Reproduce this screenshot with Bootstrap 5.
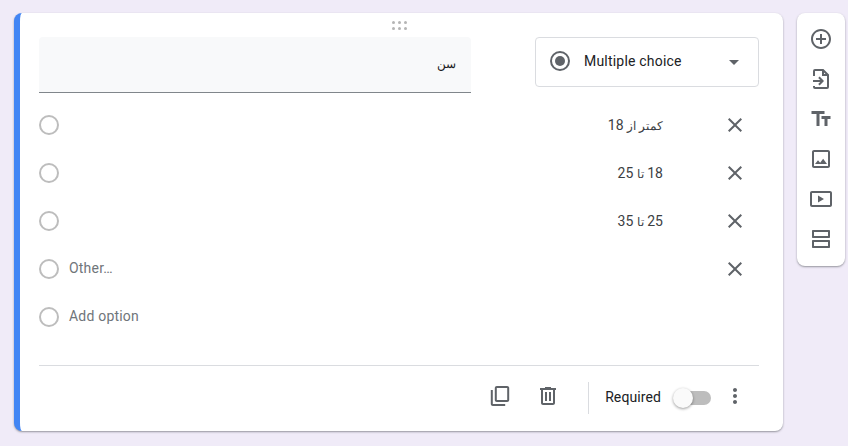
<!DOCTYPE html>
<html lang="en">
<head>
<meta charset="utf-8">
<title>Question editor</title>
<link rel="stylesheet" href="https://cdn.jsdelivr.net/npm/bootstrap@5.3.0/dist/css/bootstrap.min.css">
<style>
html,body{height:446px;overflow:hidden}
body{background:#f0ebf8;font-family:Roboto,"Liberation Sans",sans-serif;font-size:14px;color:#202124;padding:13px 3px 0 14px}
.q-card{width:769px;height:418px;background:#fff;border-left:6px solid #4285f4;border-radius:8px;box-shadow:0 1px 2px rgba(60,64,67,.5);padding:24px 24px 0 19px;position:relative}
.q-drag{position:absolute;left:372px;top:8px;width:15px;display:grid;grid-template-columns:repeat(3,3px);gap:3px}
.q-drag i{width:3px;height:3px;border-radius:50%;background:#b5b5b5}
.q-title{width:432px;height:56px;background:#f8f9fa;border-bottom:1px solid #80868b;border-radius:4px 4px 0 0;padding:0 15px 1px 0;font-size:14px;color:#202124}
.q-type{width:224px;height:50px;border:1px solid #dadce0;border-radius:4px;padding:0 19px 2px 14px;letter-spacing:.2px}
.q-type svg{flex:none;margin-right:14px}
.q-caret{width:0;height:0;border-left:5px solid transparent;border-right:5px solid transparent;border-top:5px solid #5f6368;margin-left:auto;margin-top:3px}
.q-options{margin-top:8px}
.q-row{height:48px}
.q-radio{width:20px;height:20px;border:2px solid #bdbdbd;border-radius:50%;flex:none}
.q-val{width:604px;font-size:14px;color:#3c4043}
.q-ar{font-size:12px}
.q-ph{color:#70757a;margin-left:10px;letter-spacing:.2px;width:594px;padding-bottom:2px}
.q-x{margin-left:60px;flex:none}
.q-rule{height:1px;background:#dadce0;margin-top:24px;width:720px}
.q-foot{height:62px;width:720px;padding:1px 12px 0 0}
.q-ic{margin-bottom:3px;flex:none}
.q-sep{width:1px;height:32px;background:#dadce0;margin:0 16px 0 28px}
.q-req{color:#202124;letter-spacing:.1px;margin-right:14px}
.q-switch{width:36px;height:14px;background:#bdbdbd;border-radius:7px;position:relative;margin-right:12px}
.q-knob{position:absolute;left:-2px;top:-3px;width:20px;height:20px;border-radius:50%;background:#fafafa;box-shadow:0 1px 3px rgba(0,0,0,.4)}
.q-side{width:48px;height:253px;margin-left:14px;background:#fff;border-radius:8px;box-shadow:0 1px 2px rgba(60,64,67,.5);padding-top:6px}
.q-tool{height:40px}
</style>
</head>
<body>
<div class="d-flex align-items-start">
  <div class="q-card">
    <div class="q-drag"><i></i><i></i><i></i><i></i><i></i><i></i></div>
    <div class="d-flex justify-content-between align-items-start" style="width:720px">
      <div class="q-title d-flex align-items-center justify-content-end" dir="rtl"><span class="w-100 q-ar">سن</span></div>
      <div class="q-type d-flex align-items-center">
        <svg width="20" height="20" viewBox="0 0 20 20"><circle cx="10" cy="10" r="9" fill="none" stroke="#5f6368" stroke-width="2"/><circle cx="10" cy="10" r="5" fill="#5f6368"/></svg>
        <span>Multiple choice</span>
        <span class="q-caret"></span>
      </div>
    </div>
    <div class="q-options">
      <div class="q-row d-flex align-items-center"><span class="q-radio"></span><span class="q-val" dir="rtl"><span class="q-ar">کمتر از</span> 18</span><svg class="q-x" width="24" height="24" viewBox="0 0 24 24"><path fill="#5f6368" d="M19 6.41 17.59 5 12 10.59 6.41 5 5 6.41 10.59 12 5 17.59 6.41 19 12 13.41 17.59 19 19 17.59 13.41 12z"/></svg></div>
      <div class="q-row d-flex align-items-center"><span class="q-radio"></span><span class="q-val" dir="rtl">18 <span class="q-ar">تا</span> 25</span><svg class="q-x" width="24" height="24" viewBox="0 0 24 24"><path fill="#5f6368" d="M19 6.41 17.59 5 12 10.59 6.41 5 5 6.41 10.59 12 5 17.59 6.41 19 12 13.41 17.59 19 19 17.59 13.41 12z"/></svg></div>
      <div class="q-row d-flex align-items-center"><span class="q-radio"></span><span class="q-val" dir="rtl">25 <span class="q-ar">تا</span> 35</span><svg class="q-x" width="24" height="24" viewBox="0 0 24 24"><path fill="#5f6368" d="M19 6.41 17.59 5 12 10.59 6.41 5 5 6.41 10.59 12 5 17.59 6.41 19 12 13.41 17.59 19 19 17.59 13.41 12z"/></svg></div>
      <div class="q-row d-flex align-items-center"><span class="q-radio"></span><span class="q-ph">Other…</span><svg class="q-x" width="24" height="24" viewBox="0 0 24 24"><path fill="#5f6368" d="M19 6.41 17.59 5 12 10.59 6.41 5 5 6.41 10.59 12 5 17.59 6.41 19 12 13.41 17.59 19 19 17.59 13.41 12z"/></svg></div>
      <div class="q-row d-flex align-items-center"><span class="q-radio"></span><span class="q-ph">Add option</span></div>
    </div>
    <div class="q-rule"></div>
    <div class="q-foot d-flex align-items-center justify-content-end">
      <svg width="24" height="24" viewBox="0 0 24 24" class="q-ic me-4"><path fill="#5f6368" d="M19.2 1.900H8.800c-1.100 0-2 .9-2 2v12.200c0 1.100.9 2 2 2h10.400c1.100 0 2-.9 2-2V3.900c0-1.100-.9-2-2-2zm0 14.200H8.800V3.900h10.400v12.200zM4.800 6.100H2.800v14c0 1.100.9 2 2 2h12.400v-2H4.800v-14z"/></svg>
      <svg width="24" height="24" viewBox="0 0 24 24" class="q-ic"><path fill="#5f6368" d="M15 4V3H9v1H4v2h1v13c0 1.100.9 2 2 2h10c1.100 0 2-.9 2-2V6h1V4h-5zm2 15H7V6h10v13zM9 8h2v9H9V8zm4 0h2v9h-2V8z"/></svg>
      <span class="q-sep"></span>
      <span class="q-req">Required</span>
      <span class="q-switch"><span class="q-knob"></span></span>
      <svg width="24" height="24" viewBox="0 0 24 24" class="q-ic"><path fill="#5f6368" d="M12 8c1.100 0 2-.9 2-2s-.9-2-2-2-2 .9-2 2 .9 2 2 2zm0 2c-1.100 0-2 .9-2 2s.9 2 2 2 2-.9 2-2-.9-2-2-2zm0 6c-1.100 0-2 .9-2 2s.9 2 2 2 2-.9 2-2-.9-2-2-2z"/></svg>
    </div>
  </div>
  <div class="q-side">
    <div class="q-tool d-flex align-items-center justify-content-center"><svg width="24" height="24" viewBox="0 0 24 24"><path fill="#5f6368" d="M13 7h-2v4H7v2h4v4h2v-4h4v-2h-4V7zm-1-5C6.480 2 2 6.480 2 12s4.480 10 10 10 10-4.480 10-10S17.520 2 12 2zm0 18c-4.410 0-8-3.590-8-8s3.590-8 8-8 8 3.590 8 8-3.590 8-8 8z"/></svg></div>
    <div class="q-tool d-flex align-items-center justify-content-center"><svg width="24" height="24" viewBox="0 0 24 24"><path fill="none" stroke="#5f6368" stroke-width="2" d="M5 9V4a1 1 0 0 1 1-1h8l5 5v12a1 1 0 0 1-1 1H6a1 1 0 0 1-1-1v-1"/><path fill="#5f6368" d="M13 3h2v4h4v2h-6z"/><path fill="#5f6368" d="M4 13h7.200l-2-2 1.400-1.400L15 14l-4.400 4.400L9.200 17l2-2H4z"/></svg></div>
    <div class="q-tool d-flex align-items-center justify-content-center"><svg width="24" height="24" viewBox="0 0 24 24"><path fill="#5f6368" d="M2.500 4v3h5v12h3V7h5V4h-13zm19 5h-9v3h3v7h3v-7h3V9z"/></svg></div>
    <div class="q-tool d-flex align-items-center justify-content-center"><svg width="24" height="24" viewBox="0 0 24 24"><path fill="#5f6368" d="M19 5v14H5V5h14m0-2H5c-1.100 0-2 .9-2 2v14c0 1.100.9 2 2 2h14c1.100 0 2-.9 2-2V5c0-1.100-.9-2-2-2zm-4.860 8.860l-3 3.870L9 13.140 6 17h12l-3.860-5.140z"/></svg></div>
    <div class="q-tool d-flex align-items-center justify-content-center"><svg width="24" height="24" viewBox="0 0 24 24"><path fill="#5f6368" d="M21 4H3c-1.100 0-2 .9-2 2v12c0 1.100.9 2 2 2h18c1.100 0 2-.9 2-2V6c0-1.100-.9-2-2-2zm0 14H3V6h18v12zM9 8.500v7l6-3.500z"/></svg></div>
    <div class="q-tool d-flex align-items-center justify-content-center"><svg width="24" height="24" viewBox="0 0 24 24"><path fill="#5f6368" d="M20 3H4c-.6 0-1 .4-1 1v6c0 .6.4 1 1 1h16c.6 0 1-.4 1-1V4c0-.6-.4-1-1-1zm-1 6H5V5h14v4zm1 4H4c-.6 0-1 .4-1 1v6c0 .6.4 1 1 1h16c.6 0 1-.4 1-1v-6c0-.6-.4-1-1-1zm-1 6H5v-4h14v4z"/></svg></div>
  </div>
</div>
<script src="https://cdn.jsdelivr.net/npm/bootstrap@5.3.0/dist/js/bootstrap.bundle.min.js"></script>
</body>
</html>
